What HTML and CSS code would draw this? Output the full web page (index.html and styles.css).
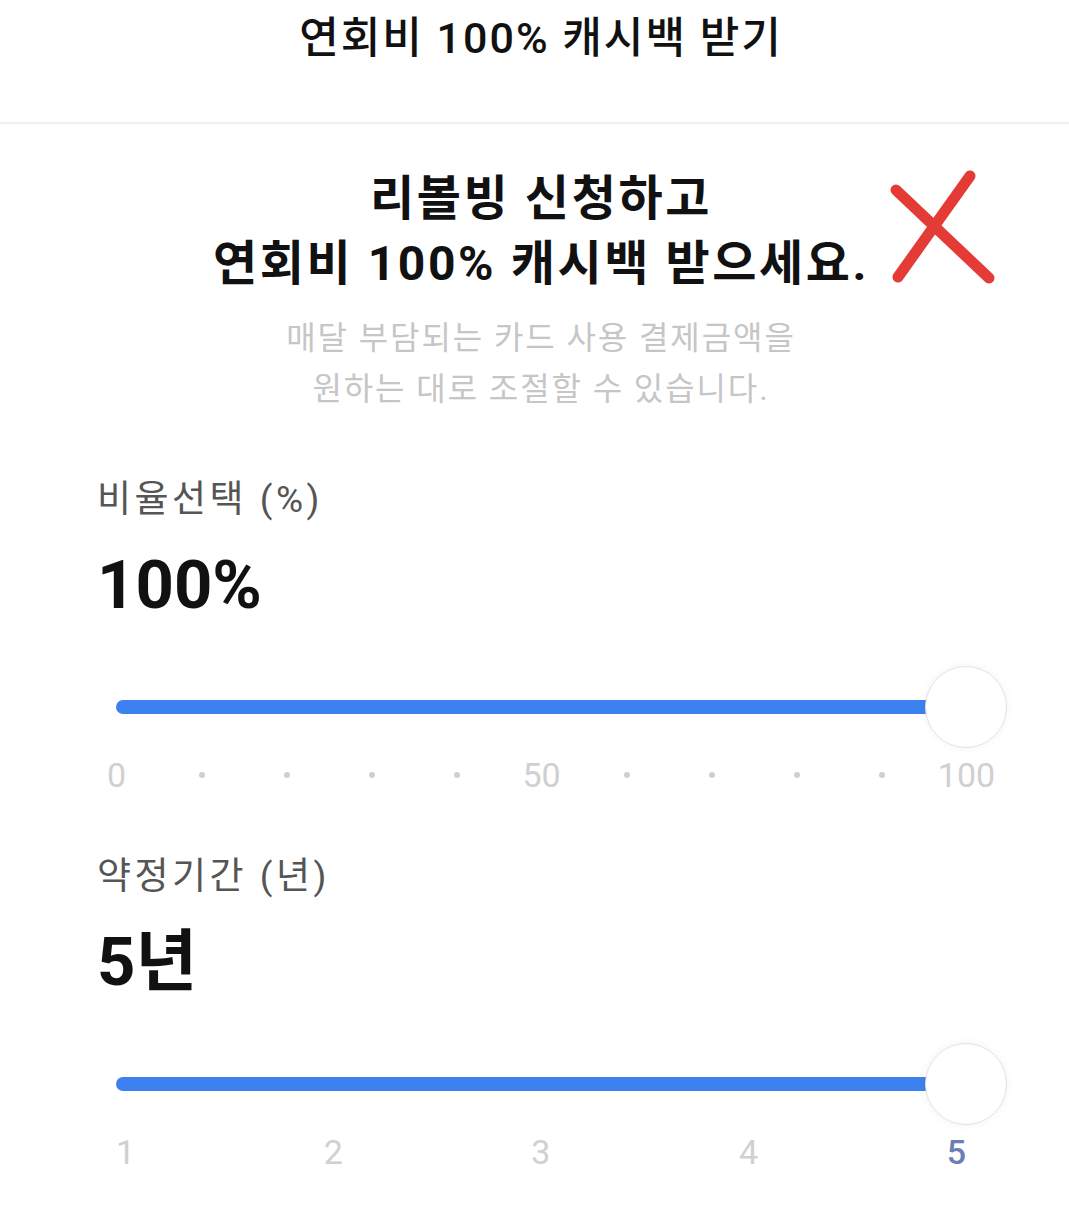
FILE: index.html
```html
<!DOCTYPE html>
<html lang="ko">
<head>
    <meta charset="UTF-8">
    <meta name="viewport" content="width=device-width, initial-scale=1.0">
    <title>연회비 100% 캐시백 받기</title>
    <link rel="stylesheet" href="styles.css">
</head>

<body>
  <header class="top_bar">
    <h1 class="top_title">연회비 100% 캐시백 받기</h1>
  </header>

  <main>
    <section class="intro">
      <h2 class="intro_title">리볼빙 신청하고<br>연회비 100% 캐시백 받으세요.</h2>
      <svg class="mark_x" width="112" height="118" viewBox="0 0 112 118">
        <path d="M8 20 L101 108" />
        <path d="M82 6 L10 107" />
      </svg>
      <p class="intro_desc">매달 부담되는 카드 사용 결제금액을<br>원하는 대로 조절할 수 있습니다.</p>
    </section>

    <section class="option">
      <p class="option_label">비율선택 (%)</p>
      <p class="option_value">100%</p>
      <div class="slider">
        <div class="slider_track"><span class="slider_fill" style="width: 100%"></span></div>
        <span class="slider_knob" style="left: 100%"></span>
      </div>
      <div class="ticks ticks_rate">
        <span>0</span>
        <span><i class="dot"></i></span>
        <span><i class="dot"></i></span>
        <span><i class="dot"></i></span>
        <span><i class="dot"></i></span>
        <span>50</span>
        <span><i class="dot"></i></span>
        <span><i class="dot"></i></span>
        <span><i class="dot"></i></span>
        <span><i class="dot"></i></span>
        <span>100</span>
      </div>
    </section>

    <section class="option">
      <p class="option_label">약정기간 (년)</p>
      <p class="option_value">5년</p>
      <div class="slider">
        <div class="slider_track"><span class="slider_fill" style="width: 100%"></span></div>
        <span class="slider_knob" style="left: 100%"></span>
      </div>
      <div class="ticks ticks_year">
        <span>1</span>
        <span>2</span>
        <span>3</span>
        <span>4</span>
        <span class="active">5</span>
      </div>
    </section>
  </main>
</body>
</html>
```

FILE: styles.css
```css
body { margin: 0; background: #fff; color: #111; font-family: Roboto, "Noto Sans CJK KR", sans-serif; }
p, h1, h2 { margin: 0; }

.top_bar { height: 122px; padding-left: 13px; border-bottom: 2px solid #efefef; text-align: center; }
.top_title { font-size: 43px; font-weight: 500; line-height: 76px; letter-spacing: 2px; }

.intro { position: relative; text-align: center; padding-top: 42px; padding-left: 13px; }
.intro_title { font-size: 48px; font-weight: 700; line-height: 65px; letter-spacing: 2.6px; }
.intro_desc { margin-top: 17px; font-size: 32px; line-height: 51px; color: #c6c6c6; letter-spacing: 1.9px; }
.mark_x { position: absolute; left: 888px; top: 46px; }
.mark_x path { fill: none; stroke: #e53b36; stroke-width: 11; stroke-linecap: round; }

.option { padding-top: 60px; }
.option + .option { padding-top: 57px; }
.option_label { padding-left: 97px; font-size: 37px; line-height: 50px; color: #555; letter-spacing: 3.5px; }
.option_value { margin-top: 20px; padding-left: 97px; font-size: 67px; font-weight: 700; line-height: 80px; color: #111; }

.slider { position: relative; display: flex; align-items: center; height: 82px; margin: 41px 103px 0 116px; }
.slider_track { flex-grow: 1; height: 14px; border-radius: 7px; background: #e6e6e6; overflow: hidden; }
.slider_fill { display: block; height: 100%; background: #3d80ef; }
.slider_knob { position: absolute; top: 0; width: 82px; height: 82px; margin-left: -41px; box-sizing: border-box; border: 1.5px solid #e3e3e3; border-radius: 50%; background: #fff; box-shadow: 0 0 8px rgba(0, 0, 0, 0.05); }

.ticks { margin-top: 7px; font-size: 34px; line-height: 40px; color: #d0d0d0; }
.ticks_rate { display: grid; grid-template-columns: repeat(11, 85px); margin-left: 74px; }
.ticks_rate > span { display: flex; align-items: center; justify-content: center; }
.dot { display: block; width: 6px; height: 6px; border-radius: 50%; background: #cfcfcf; }
.ticks_year { display: flex; justify-content: space-between; margin-left: 116px; margin-right: 103px; }
.ticks_year .active { color: #6a7fb5; font-weight: 500; }
```
